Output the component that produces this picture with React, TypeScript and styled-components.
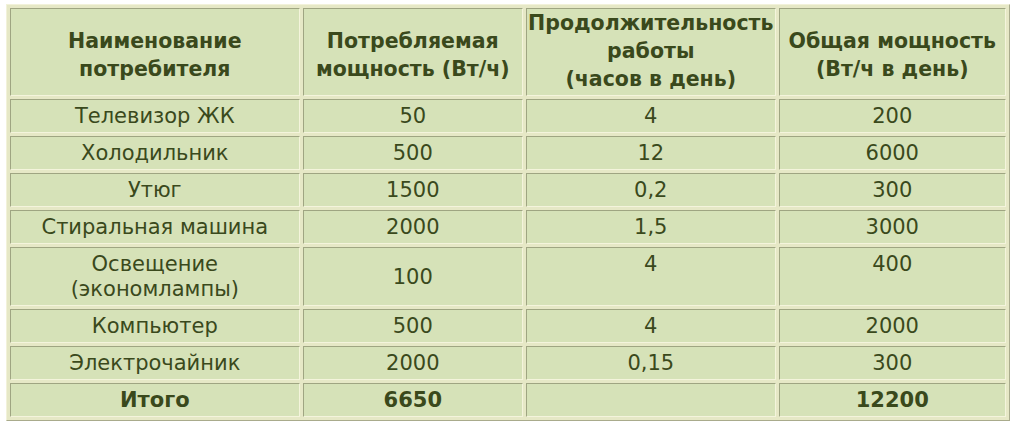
import * as React from "react";
import styled, { createGlobalStyle } from "styled-components";

const Global = createGlobalStyle`
  html, body {
    margin: 0;
    padding: 0;
    background: #ffffff;
  }
`;

const Page = styled.div`
  padding: 4px 6px;
`;

const Table = styled.table`
  width: 1004px;
  border-collapse: separate;
  border-spacing: 3px;
  background: #e6e8c6;
  border: 1px solid;
  border-color: #f2f2da #a9ab8c #a9ab8c #f2f2da;
  font-family: "DejaVu Sans", sans-serif;
  color: #3a491c;
  table-layout: fixed;
`;

const Cell = styled.td<{ $top?: boolean; $bold?: boolean }>`
  background: #d6e2b8;
  border: 1px solid;
  border-color: #9fa582 #f4f4dc #f4f4dc #9fa582;
  text-align: center;
  vertical-align: ${(p) => (p.$top ? "top" : "middle")};
  font-size: 21px;
  line-height: 25px;
  font-weight: ${(p) => (p.$bold ? "bold" : "normal")};
  padding: 4px 0 3px;
  white-space: nowrap;
`;

const Head = styled(Cell)`
  font-weight: bold;
  font-size: 20.5px;
  line-height: 28px;
  height: 81px;
  padding: ${(p) => (p.$top ? "0 0 2px" : "5px 0 0")};
`;

type Row = { name: React.ReactNode; power: string; hours: string; total: string; tall?: boolean };

const rows: Row[] = [
  { name: "Телевизор ЖК", power: "50", hours: "4", total: "200" },
  { name: "Холодильник", power: "500", hours: "12", total: "6000" },
  { name: "Утюг", power: "1500", hours: "0,2", total: "300" },
  { name: "Стиральная машина", power: "2000", hours: "1,5", total: "3000" },
  {
    name: (
      <>
        Освещение
        <br />
        (экономлампы)
      </>
    ),
    power: "100",
    hours: "4",
    total: "400",
    tall: true,
  },
  { name: "Компьютер", power: "500", hours: "4", total: "2000" },
  { name: "Электрочайник", power: "2000", hours: "0,15", total: "300" },
];

export default function App() {
  return (
    <Page>
      <Global />
      <Table>
        <colgroup>
          <col style={{ width: 289 }} />
          <col style={{ width: 220 }} />
          <col style={{ width: 249 }} />
          <col style={{ width: 227 }} />
        </colgroup>
        <tbody>
          <tr>
            <Head>
              Наименование
              <br />
              потребителя
            </Head>
            <Head>
              Потребляемая
              <br />
              мощность (Вт/ч)
            </Head>
            <Head $top>
              Продолжительность
              <br />
              работы
              <br />
              (часов в день)
            </Head>
            <Head>
              Общая мощность
              <br />
              (Вт/ч в день)
            </Head>
          </tr>
          {rows.map((r, i) => (
            <tr key={i}>
              <Cell>{r.name}</Cell>
              <Cell>{r.power}</Cell>
              <Cell $top={r.tall}>{r.hours}</Cell>
              <Cell $top={r.tall}>{r.total}</Cell>
            </tr>
          ))}
          <tr>
            <Cell $bold>Итого</Cell>
            <Cell $bold>6650</Cell>
            <Cell></Cell>
            <Cell $bold>12200</Cell>
          </tr>
        </tbody>
      </Table>
    </Page>
  );
}
